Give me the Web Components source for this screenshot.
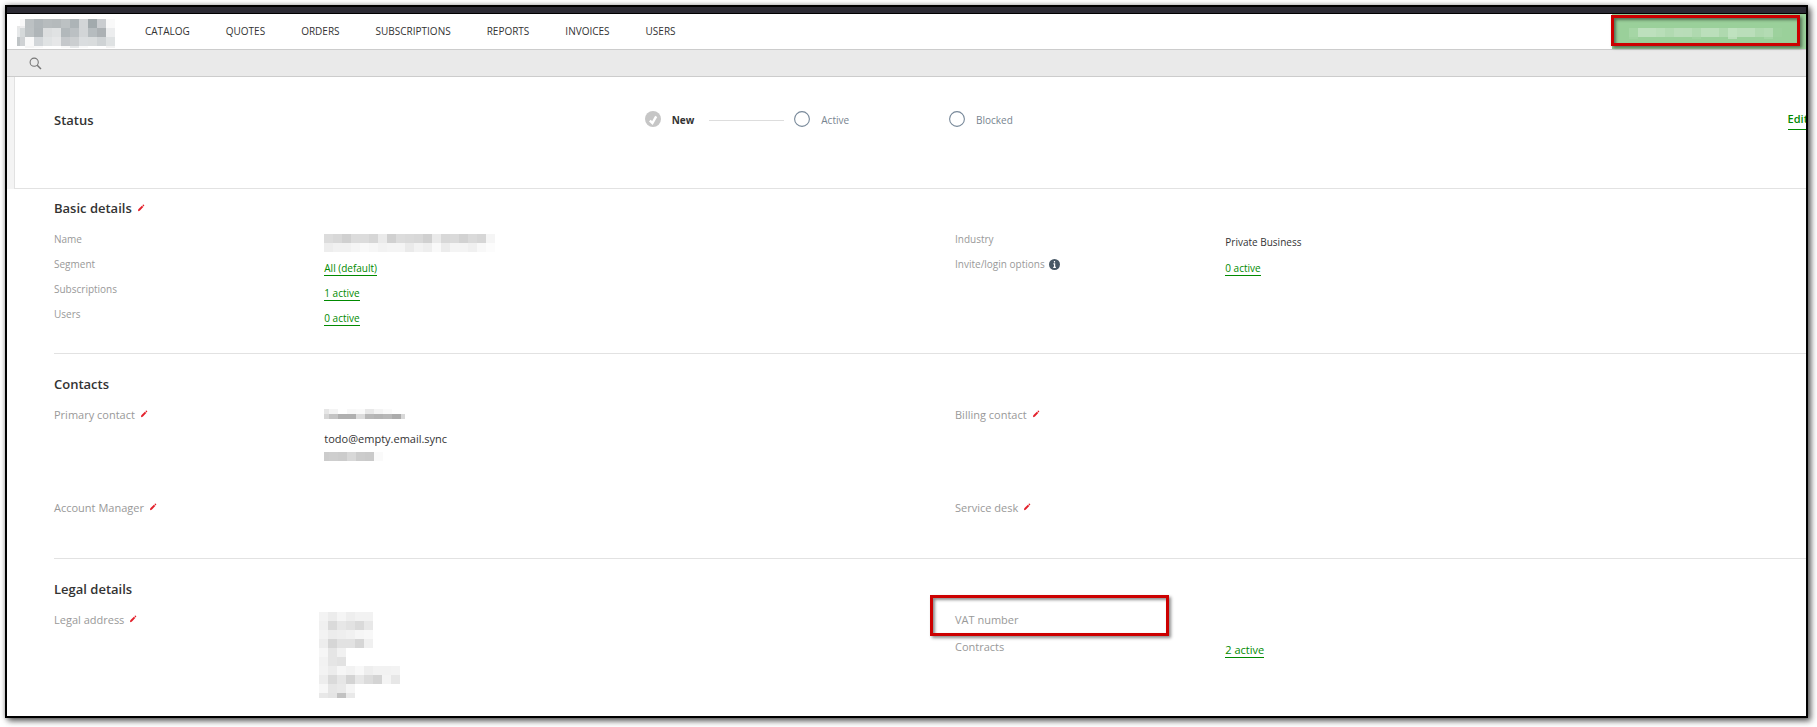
<!DOCTYPE html>
<html lang="en">
<head>
<meta charset="utf-8">
<title>Account details</title>
<style>
  body {
    margin: 0;
    background: #fff;
    color: #333;
    font: 10px/25px "Open Sans", "Noto Sans", sans-serif;
  }
</style>
</head>
<body>
<app-frame>
  <app-header slot="header">
    <pixel-block slot="logo" x="3 5 9 9 9 9 9 9 9 9 9 9" y="7 2 9 7 2 2"
      cells="- f8 bcc1c3 b0b6b9 b7bcbe b5babc bcc1c3 adb4b7 d2d5d7 a2aaad cacdd0 f9;
             e8 ededee bcc1c3 b0b6b9 b7bcbe b5babc bcc1c3 adb4b7 d2d5d7 a2aaad cacdd0 f9;
             e6e8e9 d5d9da bdc2c4 afb5b8 dcdedf e0e2e3 b2b8bb bbc0c3 d2d5d7 b6bcbf acb1b4 ecedee;
             bfc4c6 cfd2d4 f9 d2d6d9 e0e3e4 e6e7e8 c5c8cb cbced0 dadddf d9dcdd cfd3d5 dfe2e3;
             bfc4c6 cfd2d4 f9 d2d6d9 e0e3e4 e6e7e8 c5c8cb cbced0 dadddf d9dcdd cfd3d5 dfe2e3;
             - - f5 f9 - - f8 e6e8e9 f9 - - f2"></pixel-block>
    <a href="#catalog">CATALOG</a>
    <a href="#quotes">QUOTES</a>
    <a href="#orders">ORDERS</a>
    <a href="#subscriptions">SUBSCRIPTIONS</a>
    <a href="#reports">REPORTS</a>
    <a href="#invoices">INVOICES</a>
    <a href="#users">USERS</a>
    <pixel-block slot="user" x="9 9 9 9 9 9 9 9 9 9 9 9 9 9 9 9 9" y="9 2"
      cells="a5d6a5 bde0bd bde0bd b8deb8 b1dab1 b9ddb9 b8ddb8 afd9af bbdfbb bbdfbb afd9af bfe2bf badeba badeba afd9af b3dbb3 9dd19d;
             a0d3a0 - - - - - - a0d3a0 - - - b9deb9 - - - a4d5a4 -"></pixel-block>
  </app-header>

  <status-panel heading="Status">
    <status-step done>New</status-step>
    <status-step>Active</status-step>
    <status-step last>Blocked</status-step>
    <a slot="action" href="#edit">Edit</a>
  </status-panel>

  <detail-section heading="Basic details" editable compact>
    <detail-field label="Name">
      <pixel-block x="9 9 9 9 9 9 9 9 9 9 9 9 9 9 9 9 9 9 9" y="9 9"
        cells="dc d8 d0 dc dc d6 ea d0 dc da d8 d0 ea d8 da d2 da d6 f5;
               ed f1 f1 f5 f9 f6 f2 f4 f4 ea f2 ee f9 ec f4 f4 f0 f8 fc"></pixel-block>
    </detail-field>
    <detail-field label="Segment"><a href="#segment">All (default)</a></detail-field>
    <detail-field label="Subscriptions"><a href="#account-subscriptions">1 active</a></detail-field>
    <detail-field label="Users"><a href="#account-users">0 active</a></detail-field>
    <detail-field slot="right" label="Industry">Private Business</detail-field>
    <detail-field slot="right" label="Invite/login options" info><a href="#invite">0 active</a></detail-field>
  </detail-section>

  <detail-section heading="Contacts">
    <detail-field label="Primary contact" editable wide tall>
      <pixel-block x="5 9 9 9 9 9 9 9 9 4" y="5 5"
        cells="e6 f4 - f8 fa e8 f4 fa - -;
               d6 c4 b0 b0 dc b8 b4 b8 ac d8"></pixel-block>
      <span>todo@empty.email.sync</span>
      <pixel-block x="5 9 9 9 9 9 9" y="9"
        cells="cc ce cc d8 cc ca fa"></pixel-block>
    </detail-field>
    <detail-field label="Account Manager" editable wide></detail-field>
    <detail-field slot="right" label="Billing contact" editable wide tall></detail-field>
    <detail-field slot="right" label="Service desk" editable wide></detail-field>
  </detail-section>

  <detail-section heading="Legal details" last>
    <detail-field label="Legal address" editable wide outdent>
      <pixel-block x="9 9 9 9 9 9 9 9 9" y="9 9 9 9 9 9 9 9 9 5"
        cells="f3 ec f5 ee f2 f2 - - -;
               f0 da e7 e2 da e8 - - -;
               f3 ec ee f1 f6 f8 - - -;
               ed d6 e2 e2 d6 f0 - - -;
               f6 e5 f1 - - - - - -;
               f2 e5 e2 - - - - - -;
               f3 ec f6 f2 f8 ee f2 f2 f3;
               ed da e6 d4 e7 dc d4 f4 e7;
               f7 e6 e9 f5 - - - - -;
               e8 e4 c2 e9 - - - - -"></pixel-block>
    </detail-field>
    <detail-field slot="right" label="VAT number" wide>
      <mark-box slot="mark"></mark-box>
    </detail-field>
    <detail-field slot="right" label="Contracts" wide><a href="#contracts">2 active</a></detail-field>
  </detail-section>
</app-frame>

<script>
// pencil used next to everything that can be edited
const PENCIL = `
  <svg width="8" height="8" viewBox="0 0 8 8" aria-hidden="true">
    <path d="M1 7.2 1.3 5.3 4.9 1.7 6.3 3.1 2.7 6.7z" fill="#e3202b"/>
    <path d="M5.4 1.2 6 .6Q6.5.3 7 .9 7.5 1.4 7.1 2L6.7 2.5z" fill="#e3202b"/>
  </svg>`;

class BaseElement extends HTMLElement {
  connectedCallback() {
    if (this.shadowRoot) return;
    this.attachShadow({ mode: "open" }).innerHTML = this.render();
  }
}

/**
    <pixel-block x="9 9" y="9" cells="d0 e3e4e5"></pixel-block>
    x, y: column widths and row heights
    cells: a grey level or a full colour for each cell, "-" is empty
 */
customElements.define(
  "pixel-block",
  class extends BaseElement {
    render() {
      const widths = this.getAttribute("x").split(" ").map(Number);
      const heights = this.getAttribute("y").split(" ").map(Number);
      const sum = (list) => list.reduce((a, b) => a + b, 0);
      let rects = "";
      this.getAttribute("cells").split(";").forEach((row, r) => {
        row.trim().split(/\s+/).forEach((cell, c) => {
          if (cell === "-") return;
          const fill = cell.length === 2 ? cell.repeat(3) : cell;
          const x = sum(widths.slice(0, c));
          const y = sum(heights.slice(0, r));
          rects += `<rect x="${x}" y="${y}" width="${widths[c]}" height="${heights[r]}" fill="#${fill}"/>`;
        });
      });
      return `
        <style>
          :host { display: block; line-height: 0; }
          svg { display: block; }
        </style>
        <svg width="${sum(widths)}" height="${sum(heights)}" shape-rendering="crispEdges" aria-hidden="true">${rects}</svg>`;
    }
  }
);

// red rectangle laid over its positioned parent
customElements.define(
  "mark-box",
  class extends BaseElement {
    render() {
      return `
        <style>
          :host {
            position: absolute;
            inset: var(--mark-inset, 0);
            box-sizing: border-box;
            border: 3px solid #c00;
            box-shadow: 2px 2px 3px rgba(0, 0, 0, .45), inset 2px 2px 3px rgba(0, 0, 0, .45);
            pointer-events: none;
          }
        </style>`;
    }
  }
);

customElements.define(
  "app-frame",
  class extends BaseElement {
    render() {
      return `
        <style>
          :host {
            display: block;
            box-sizing: border-box;
            min-height: calc(100vh - 14px);
            margin: 5px 9px 9px 5px;
            border: 2px solid #000;
            background: #fff;
            box-shadow: 3px 3px 6px rgba(0, 0, 0, .6), 0 0 5px rgba(0, 0, 0, .3);
          }
          .top { height: 6px; background: #2b2a33; border-bottom: 1px solid #000; }
          .search {
            display: flex;
            align-items: center;
            height: 26px;
            padding-left: 22px;
            background: #eaeaea;
            border-bottom: 1px solid #ccc;
          }
          .search button { padding: 0; border: 0; background: none; display: flex; }
          main { overflow: hidden; }
        </style>
        <div class="top"></div>
        <slot name="header"></slot>
        <div class="search">
          <button aria-label="Search">
            <svg width="13" height="13" viewBox="0 0 13 13" fill="none" stroke="#777">
              <circle cx="5.2" cy="5.2" r="4.1" stroke-width="1.1"/>
              <path d="M8.2 8.2 12 12" stroke-width="1.5"/>
            </svg>
          </button>
        </div>
        <main><slot></slot></main>`;
    }
  }
);

customElements.define(
  "app-header",
  class extends BaseElement {
    render() {
      return `
        <style>
          :host {
            display: flex;
            height: 35px;
            border-bottom: 1px solid #ccc;
          }
          .logo { width: 98px; padding: 5px 0 0 10px; }
          nav { flex: 1; display: flex; gap: 36px; padding: 5px 0 0 30px; }
          ::slotted(a) { color: #333; text-decoration: none; }
          .user {
            position: relative;
            width: 194px;
            padding: 14px 0 0 17px;
            box-sizing: border-box;
            border: 0;
            background: #9ad09a;
            display: flex;
            align-items: flex-start;
            --mark-inset: 1px 6px 3px -1px;
          }
        </style>
        <div class="logo"><slot name="logo"></slot></div>
        <nav><slot></slot></nav>
        <button class="user" aria-label="Account menu">
          <slot name="user"></slot>
          <mark-box></mark-box>
        </button>`;
    }
  }
);

customElements.define(
  "status-panel",
  class extends BaseElement {
    render() {
      return `
        <style>
          :host {
            display: block;
            padding-left: 7px;
            background: #f4f4f4;
          }
          .panel {
            display: grid;
            grid-template-columns: 1fr 2fr;
            gap: 10px;
            height: 111px;
            padding-left: 39px;
            background: #fff;
            border-left: 1px solid #e2e2e2;
            border-bottom: 1px solid #e2e2e2;
          }
          h2 { margin: 31px 0 0; font-size: 13px; font-weight: 600; line-height: 25px; }
          .side { display: flex; justify-content: space-between; align-items: flex-start; padding-top: 32px; }
          .steps { display: flex; padding-top: 2px; }
          ::slotted(a) {
            margin-right: -2px;
            color: #008a00;
            font-size: 11px;
            font-weight: 600;
            line-height: 20px;
            border-bottom: 1px solid #008a00;
            text-decoration: none;
          }
        </style>
        <div class="panel">
          <h2>${this.getAttribute("heading")}</h2>
          <div class="side">
            <div class="steps"><slot></slot></div>
            <slot name="action"></slot>
          </div>
        </div>`;
    }
  }
);

customElements.define(
  "status-step",
  class extends BaseElement {
    render() {
      const done = this.hasAttribute("done");
      const icon = done
        ? `<circle cx="8" cy="8" r="8" fill="#c6c6c6"/>
           <path d="M4.8 9.6 7.4 12 11.2 5.4" fill="none" stroke="#fff" stroke-width="2.4"/>`
        : `<circle cx="8" cy="8" r="7.4" fill="#fff" stroke="#778899" stroke-width="1.1"/>`;
      return `
        <style>
          :host { display: flex; color: #778490; line-height: 18px; }
          :host([done]) { color: #333; font-weight: 700; }
          svg { margin-right: 11px; }
          .line { width: 75px; height: 1px; margin: 9px 10px 0 15px; }
          :host([done]) .line { background: #ddd; }
          :host([last]) .line { display: none; }
        </style>
        <svg width="16" height="16" viewBox="0 0 16 16" aria-hidden="true">${icon}</svg>
        <slot></slot>
        <span class="line"></span>`;
    }
  }
);

customElements.define(
  "detail-section",
  class extends BaseElement {
    render() {
      const edit = this.hasAttribute("editable")
        ? `<button aria-label="Edit">${PENCIL}</button>`
        : "";
      return `
        <style>
          /* columns run past the right edge of the window */
          :host {
            display: block;
            margin: 0 -50px 0 47px;
            padding: 21px 0 1px;
            border-bottom: 1px solid #e2e2e2;
          }
          :host([compact]) { padding: 10px 0 26px; }
          :host([last]) { border-bottom: 0; }
          header { display: flex; align-items: center; gap: 5px; margin-bottom: 9px; }
          :host([compact]) header { margin-bottom: 10px; }
          h2 { margin: 0; font-size: 13px; font-weight: 600; line-height: 18px; }
          button { display: flex; padding: 0; border: 0; background: none; }
          .columns { display: grid; grid-template-columns: 1fr 1fr; }
        </style>
        <header><h2>${this.getAttribute("heading")}</h2>${edit}</header>
        <div class="columns">
          <div><slot></slot></div>
          <div><slot name="right"></slot></div>
        </div>`;
    }
  }
);

customElements.define(
  "detail-field",
  class extends BaseElement {
    render() {
      const label = this.getAttribute("label");
      const edit = this.hasAttribute("editable")
        ? `<button aria-label="Edit ${label}">${PENCIL}</button>`
        : "";
      const info = this.hasAttribute("info")
        ? `<svg class="info" width="11" height="11" viewBox="0 0 11 11" aria-hidden="true">
             <circle cx="5.5" cy="5.5" r="5.5" fill="#475866"/>
             <path d="M5.5 2v1.5M4.4 4.8h1.2v3.4M4.2 8.4h2.7" fill="none" stroke="#fff" stroke-width="1.2"/>
           </svg>`
        : "";
      return `
        <style>
          :host {
            position: relative;
            display: grid;
            grid-template-columns: 30% 1fr;
            min-height: 25px;
            --mark-inset: -12px auto auto -25px;
          }
          :host([wide]) { min-height: 27px; font-size: 11px; }
          :host([editable]) { min-height: 62px; }
          :host([tall]) { min-height: 93px; }
          .label { display: flex; align-items: center; height: 25px; color: #999; }
          button { display: flex; margin-left: 5px; padding: 0 0 2px; border: 0; background: none; }
          .info { margin-left: 4px; }
          .value { display: flex; flex-direction: column; align-items: flex-start; gap: 5px; padding-top: 7px; line-height: 16px; }
          :host([outdent]) .value { margin-left: -5px; padding-top: 5px; }
          ::slotted(a) {
            color: #008a00;
            line-height: 14px;
            border-bottom: 1px solid #008a00;
            text-decoration: none;
            margin-top: 2px;
          }
          ::slotted(span) { margin-top: 7px; }
          ::slotted(mark-box) { width: 239px; height: 41px; }
        </style>
        <div class="label">${label}${edit}${info}</div>
        <div class="value"><slot></slot></div>
        <slot name="mark"></slot>`;
    }
  }
);
</script>
</body>
</html>
